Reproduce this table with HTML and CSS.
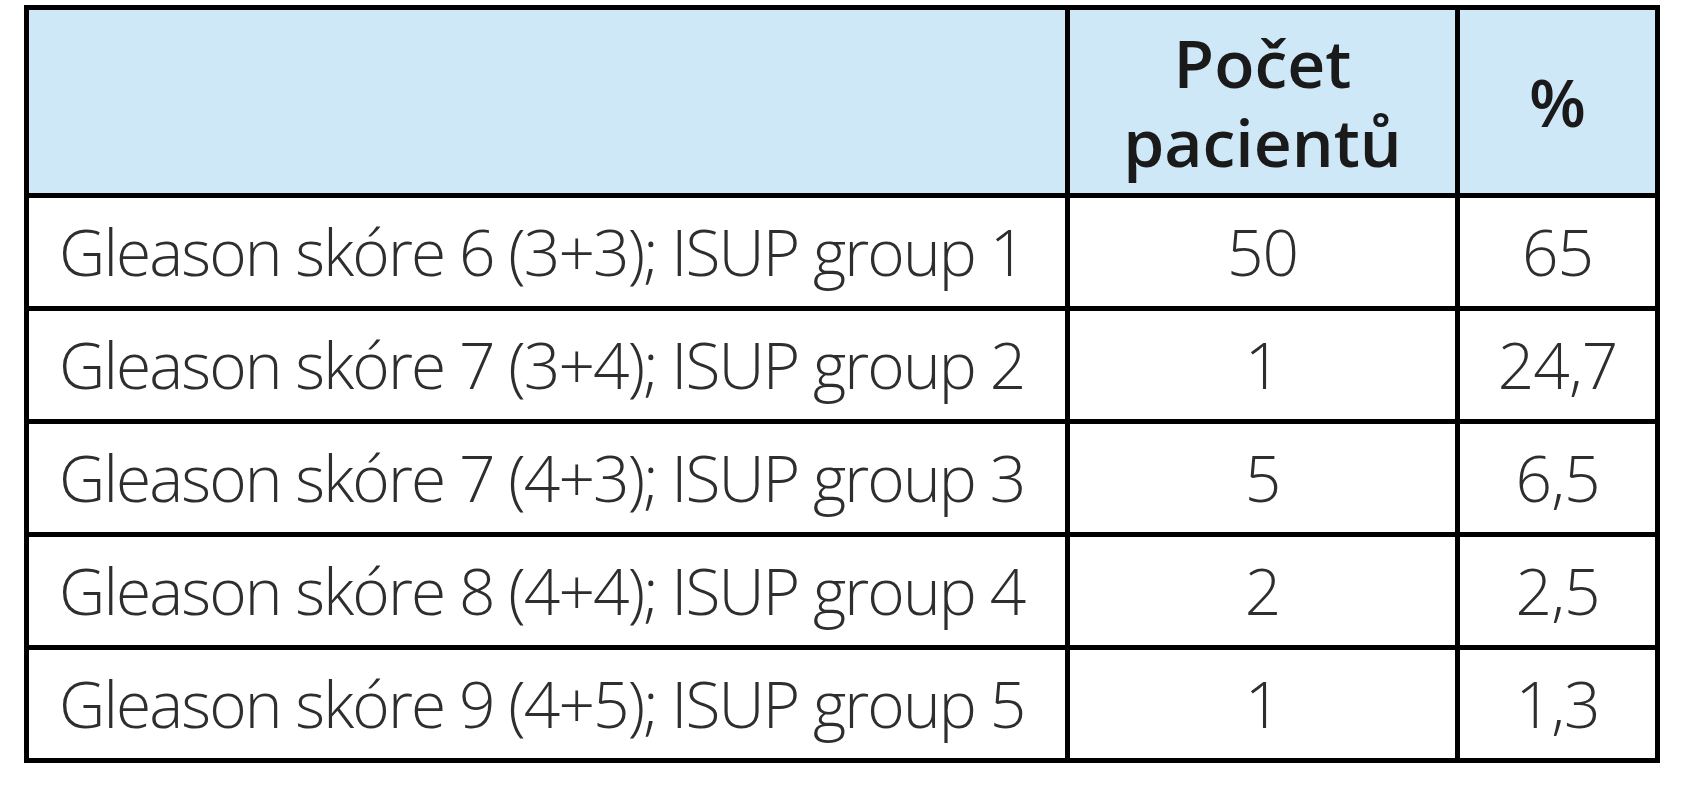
FILE: index.html
```html
<!DOCTYPE html>
<html lang="cs">
<head>
<meta charset="utf-8">
<title>Gleason skóre</title>
<link rel="stylesheet" href="styles.css">
</head>
<body>
<table class="grade-table">
  <colgroup>
    <col class="col-label">
    <col class="col-count">
    <col class="col-pct">
  </colgroup>
  <thead>
    <tr class="head-row">
      <th class="cell-label"></th>
      <th class="cell-num"><span class="head-line">Počet</span><span class="head-line">pacientů</span></th>
      <th class="cell-num">%</th>
    </tr>
  </thead>
  <tbody>
    <tr class="body-row">
      <td class="cell-label">Gleason skóre 6 (3+3); ISUP group 1</td>
      <td class="cell-num">50</td>
      <td class="cell-num">65</td>
    </tr>
    <tr class="body-row">
      <td class="cell-label">Gleason skóre 7 (3+4); ISUP group 2</td>
      <td class="cell-num">1</td>
      <td class="cell-num">24,7</td>
    </tr>
    <tr class="body-row">
      <td class="cell-label">Gleason skóre 7 (4+3); ISUP group 3</td>
      <td class="cell-num">5</td>
      <td class="cell-num">6,5</td>
    </tr>
    <tr class="body-row">
      <td class="cell-label">Gleason skóre 8 (4+4); ISUP group 4</td>
      <td class="cell-num">2</td>
      <td class="cell-num">2,5</td>
    </tr>
    <tr class="body-row">
      <td class="cell-label">Gleason skóre 9 (4+5); ISUP group 5</td>
      <td class="cell-num">1</td>
      <td class="cell-num">1,3</td>
    </tr>
  </tbody>
</table>
</body>
</html>
```

FILE: styles.css
```css
html, body {
  margin: 0;
  padding: 0;
  background: #ffffff;
}

body {
  padding: 5px 0 0 24px;
  font-family: "Open Sans", "Noto Sans", sans-serif;
}

.grade-table {
  border-collapse: collapse;
  border: 5px solid #000;
  table-layout: fixed;
  width: 1631px;
}

.col-label { width: 1041px; }
.col-count { width: 390px; }
.col-pct { width: 200px; }

.grade-table th,
.grade-table td {
  border: 5px solid #000;
  padding: 0;
  font-size: 66px;
}

.head-row {
  height: 188px;
  background: #cfe8f8;
}

.head-row th {
  font-weight: 600;
  color: #1a1a1a;
  line-height: 79px;
  vertical-align: middle;
}

.head-line {
  display: block;
}

.body-row {
  height: 113px;
}

.body-row td {
  font-weight: 300;
  font-size: 64px;
  color: #2e2e2e;
  line-height: 1;
  vertical-align: middle;
  letter-spacing: -1px;
}

.body-row .cell-label {
  letter-spacing: -1.9px;
}

.cell-label {
  text-align: left;
  padding-left: 30px !important;
  white-space: nowrap;
}

.cell-num {
  text-align: center;
}
```
